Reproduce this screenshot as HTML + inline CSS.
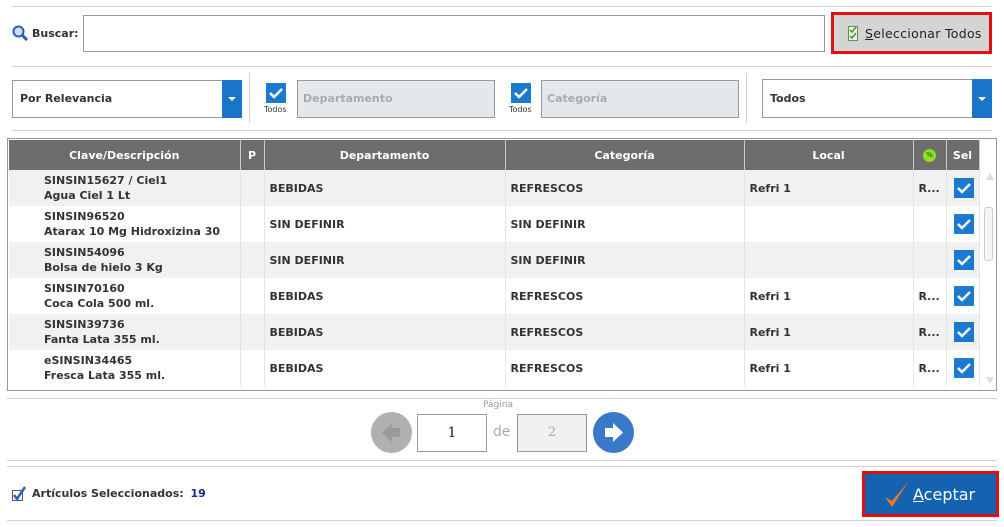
<!DOCTYPE html>
<html><head><meta charset="utf-8"><style>
*{margin:0;padding:0;box-sizing:border-box}
body{width:1004px;height:527px;background:#fff;position:relative;overflow:hidden;font-family:"DejaVu Sans","Liberation Sans",sans-serif;font-size:11px;color:#333;font-weight:bold}
.a{position:absolute}
.hl{position:absolute;height:1px;background:#d0d0d0}
.inp{position:absolute;border:1px solid #999;background:#fff}
.chk{position:absolute;width:20px;height:20px;background:#1a7ad0}
.chk svg{display:block}
table{border-collapse:collapse;table-layout:fixed}
th{background:#6d6d6d;color:#fff;height:30px;font-size:11px;border-right:1px solid #ccc;font-weight:bold}
td{height:36px;border-right:1px solid #e4e4e4;padding-left:5px;vertical-align:middle;font-size:11px;line-height:15px;white-space:nowrap;overflow:hidden}
tr.g td{background:#f1f1f1}
</style></head><body>
<div class="hl" style="left:12px;top:6px;width:980px"></div>
<svg class="a" style="left:12px;top:25px" width="16" height="16" viewBox="0 0 16 16"><circle cx="6.5" cy="6.5" r="5" fill="#cfe0f5" stroke="#2a5fa8" stroke-width="2"/><path d="M10 10 L15 15" stroke="#2a5fa8" stroke-width="3"/></svg>
<div class="a" style="left:32px;top:27px">Buscar:</div>
<div class="inp" style="left:83px;top:15px;width:742px;height:37px"></div>
<div class="a" style="left:831px;top:12px;width:161px;height:42px;border:3px solid #e01010;background:#d4d4d4"></div>
<svg class="a" style="left:848px;top:26px" width="10" height="15" viewBox="0 0 10 15"><rect x="0.5" y="0.5" width="9" height="14" fill="#e8f2e0" stroke="#6a8a5a"/><path d="M2 4l2 2 4-5M2 10l2 2 4-5" stroke="#3a9a2a" stroke-width="1.5" fill="none"/></svg>
<div class="a" style="left:865px;top:26px;font-weight:normal;color:#222;font-size:12.5px;letter-spacing:0.3px"><u>S</u>eleccionar Todos</div>
<div class="hl" style="left:12px;top:66px;width:980px"></div>

<div class="inp" style="left:12px;top:80px;width:230px;height:38px"></div>
<div class="a" style="left:222px;top:80px;width:20px;height:38px;background:#1a75c8"></div>
<div class="a" style="left:228px;top:97px;width:0;height:0;border-left:4px solid transparent;border-right:4px solid transparent;border-top:4px solid #fff"></div>
<div class="a" style="left:20px;top:92px">Por Relevancia</div>
<div class="a" style="left:249px;top:73px;width:1px;height:50px;background:#ccc"></div>
<div class="chk" style="left:266px;top:83px"><svg width="20" height="20"><path d="M4 10l4 4 8-8" stroke="#fff" stroke-width="2.5" fill="none"/></svg></div>
<div class="a" style="left:264px;top:105px;font-size:8px;font-weight:normal">Todos</div>
<div class="a" style="left:297px;top:80px;width:198px;height:38px;border:1px solid #999;background:#e5e8eb"></div>
<div class="a" style="left:303px;top:92px;color:#aaa">Departamento</div>
<div class="chk" style="left:511px;top:83px"><svg width="20" height="20"><path d="M4 10l4 4 8-8" stroke="#fff" stroke-width="2.5" fill="none"/></svg></div>
<div class="a" style="left:509px;top:105px;font-size:8px;font-weight:normal">Todos</div>
<div class="a" style="left:541px;top:80px;width:198px;height:38px;border:1px solid #999;background:#e5e8eb"></div>
<div class="a" style="left:547px;top:92px;color:#aaa">Categoría</div>
<div class="a" style="left:746px;top:73px;width:1px;height:50px;background:#ccc"></div>
<div class="inp" style="left:762px;top:79px;width:230px;height:39px"></div>
<div class="a" style="left:972px;top:79px;width:20px;height:39px;background:#1a75c8"></div>
<div class="a" style="left:978px;top:97px;width:0;height:0;border-left:4px solid transparent;border-right:4px solid transparent;border-top:4px solid #fff"></div>
<div class="a" style="left:770px;top:92px">Todos</div>
<div class="hl" style="left:12px;top:130px;width:980px"></div>

<div class="a" style="left:7px;top:138px;width:990px;height:253px;border:1px solid #999"></div>
<table class="a" style="left:9px;top:140px;width:970px">
<colgroup><col style="width:231px"><col style="width:24px"><col style="width:241px"><col style="width:239px"><col style="width:169px"><col style="width:33px"><col style="width:33px"></colgroup>
<tr><th>Clave/Descripción</th><th>P</th><th>Departamento</th><th>Categoría</th><th>Local</th><th><span style="display:inline-block;width:13px;height:13px;border-radius:50%;background:#8ee020;vertical-align:middle;font-size:7px;color:#3a7a10;line-height:13px">%</span></th><th>Sel</th></tr>
<tr class="g"><td style="padding-left:35px">SINSIN15627 / Ciel1<br>Agua Ciel 1 Lt</td><td></td><td>BEBIDAS</td><td>REFRESCOS</td><td>Refri 1</td><td>R...</td><td><div style="width:20px;height:20px;background:#1a7ad0;margin-left:2px"><svg width="20" height="20"><path d="M4 10l4 4 8-8" stroke="#fff" stroke-width="2.5" fill="none"/></svg></div></td></tr>
<tr><td style="padding-left:35px">SINSIN96520<br>Atarax 10 Mg Hidroxizina 30</td><td></td><td>SIN DEFINIR</td><td>SIN DEFINIR</td><td></td><td></td><td><div style="width:20px;height:20px;background:#1a7ad0;margin-left:2px"><svg width="20" height="20"><path d="M4 10l4 4 8-8" stroke="#fff" stroke-width="2.5" fill="none"/></svg></div></td></tr>
<tr class="g"><td style="padding-left:35px">SINSIN54096<br>Bolsa de hielo 3 Kg</td><td></td><td>SIN DEFINIR</td><td>SIN DEFINIR</td><td></td><td></td><td><div style="width:20px;height:20px;background:#1a7ad0;margin-left:2px"><svg width="20" height="20"><path d="M4 10l4 4 8-8" stroke="#fff" stroke-width="2.5" fill="none"/></svg></div></td></tr>
<tr><td style="padding-left:35px">SINSIN70160<br>Coca Cola 500 ml.</td><td></td><td>BEBIDAS</td><td>REFRESCOS</td><td>Refri 1</td><td>R...</td><td><div style="width:20px;height:20px;background:#1a7ad0;margin-left:2px"><svg width="20" height="20"><path d="M4 10l4 4 8-8" stroke="#fff" stroke-width="2.5" fill="none"/></svg></div></td></tr>
<tr class="g"><td style="padding-left:35px">SINSIN39736<br>Fanta Lata 355 ml.</td><td></td><td>BEBIDAS</td><td>REFRESCOS</td><td>Refri 1</td><td>R...</td><td><div style="width:20px;height:20px;background:#1a7ad0;margin-left:2px"><svg width="20" height="20"><path d="M4 10l4 4 8-8" stroke="#fff" stroke-width="2.5" fill="none"/></svg></div></td></tr>
<tr><td style="padding-left:35px">eSINSIN34465<br>Fresca Lata 355 ml.</td><td></td><td>BEBIDAS</td><td>REFRESCOS</td><td>Refri 1</td><td>R...</td><td><div style="width:20px;height:20px;background:#1a7ad0;margin-left:2px"><svg width="20" height="20"><path d="M4 10l4 4 8-8" stroke="#fff" stroke-width="2.5" fill="none"/></svg></div></td></tr>
</table>
<div class="a" style="left:986px;top:173px;width:0;height:0;border-left:4px solid transparent;border-right:4px solid transparent;border-bottom:7px solid #ddd"></div>
<div class="a" style="left:984px;top:207px;width:9px;height:54px;border:1px solid #ccc;border-radius:3px;background:#f4f4f4"></div>
<div class="a" style="left:986px;top:377px;width:0;height:0;border-left:4px solid transparent;border-right:4px solid transparent;border-top:7px solid #ddd"></div>

<div class="hl" style="left:7px;top:398px;width:990px"></div>
<div class="a" style="left:483px;top:400px;font-size:9px;font-weight:normal;color:#999">Página</div>
<div class="a" style="left:371px;top:412px;width:41px;height:41px;border-radius:50%;background:#b0b0b0"></div>
<svg class="a" style="left:378px;top:419px" width="27" height="27" viewBox="0 0 27 27"><path d="M4 13.5 L14 4 V9 H22 V18 H14 V23 Z" fill="#9a9a9a"/></svg>
<div class="inp" style="left:417px;top:414px;width:70px;height:38px;font-weight:normal;font-family:'DejaVu Serif',serif;font-size:14px;text-align:center;line-height:36px;color:#222">1</div>
<div class="a" style="left:493px;top:424px;font-weight:normal;color:#aaa;font-size:14px">de</div>
<div class="inp" style="left:517px;top:414px;width:70px;height:38px;background:#f0f0f0;font-weight:normal;font-family:'DejaVu Serif',serif;font-size:13px;text-align:center;line-height:36px;color:#aaa">2</div>
<div class="a" style="left:593px;top:412px;width:41px;height:41px;border-radius:50%;background:#3a78c8"></div>
<svg class="a" style="left:600px;top:419px" width="27" height="27" viewBox="0 0 27 27"><path d="M23 13.5 L13 4 V9 H5 V18 H13 V23 Z" fill="#fff"/></svg>
<div class="hl" style="left:7px;top:460px;width:990px"></div>
<div class="hl" style="left:7px;top:466px;width:990px"></div>

<svg class="a" style="left:11px;top:486px" width="16" height="16" viewBox="0 0 16 16"><rect x="1.5" y="4.5" width="10" height="10" fill="#fff" stroke="#556"/><path d="M3 9l3 4 8-12" stroke="#2a5fb8" stroke-width="2.5" fill="none"/></svg>
<div class="a" style="left:32px;top:487px">Artículos Seleccionados: <span style="color:#1a2a7a;margin-left:3px">19</span></div>
<div class="a" style="left:862px;top:471px;width:137px;height:46px;border:3px solid #e01010;background:#1563b0"></div>
<svg class="a" style="left:882px;top:480px" width="28" height="30" viewBox="0 0 28 30"><path d="M3 17 L10 27 L26 2 L10 21 Z" fill="#f07820"/></svg>
<div class="a" style="left:913px;top:485px;color:#fff;font-weight:normal;font-size:16px"><u>A</u>ceptar</div>
<div class="hl" style="left:7px;top:520px;width:990px"></div>
</body></html>
